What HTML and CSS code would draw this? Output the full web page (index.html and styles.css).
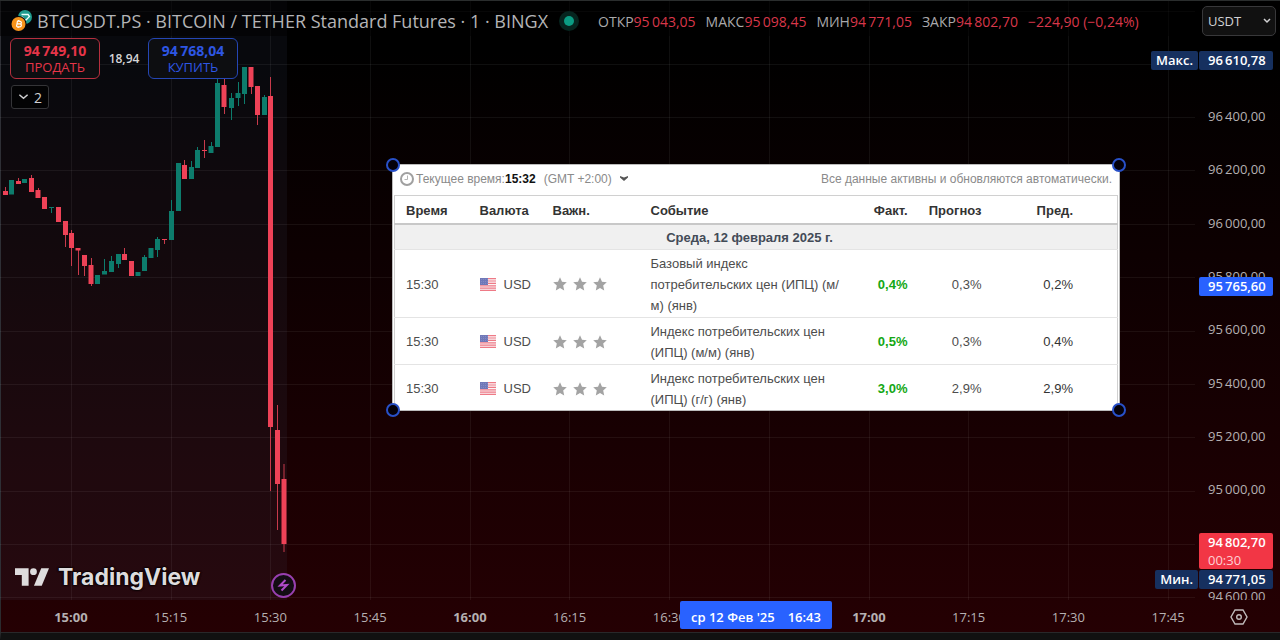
FILE: index.html
```html
<!DOCTYPE html>
<html lang="ru">
<head>
<meta charset="utf-8">
<meta name="viewport" content="width=device-width, initial-scale=1">
<title>BTCUSDT.PS — TradingView</title>
<link rel="stylesheet" href="styles.css">
</head>
<body>
<svg width="0" height="0" class="defs" aria-hidden="true">
  <defs>
    <symbol id="flag" viewBox="0 0 16 13">
      <path fill="#fbf3f4" d="M0 0h16v13H0z"/>
      <path stroke="#ee7a86" stroke-width="1.2" d="M0 .6h16M0 3h16M0 5.4h16M0 7.8h16M0 10.200h16M0 12.400h16"/>
      <path fill="#7078b8" d="M0 0h8v7H0z"/>
      <path stroke="#8b92c8" stroke-width=".7" stroke-dasharray="1 1" d="M1 1.500h7M1 3.500h7M1 5.500h7"/>
    </symbol>
    <symbol id="star" viewBox="0 0 14 14">
      <path fill="#a3a3a3" d="M7 .3l2 4.500 4.800.5-3.600 3.300 1 4.900L7 11l-4.200 2.500 1-4.900L.2 5.300 5 4.800z"/>
    </symbol>
  </defs>
</svg>
<main class="terminal">
  <section class="stage">
    <svg class="plot" aria-label="График BTCUSDT">
      <rect class="session" width="287" height="100%"/>
      <g class="grid-lines">
        <path d="M0 11.500H1195M0 64.500H1195M0 117.500H1195M0 170.500H1195M0 224.500H1195M0 277.500H1195M0 331.500H1195M0 384.500H1195M0 437.500H1195M0 491.500H1195M0 544.500H1195M0 597.500H1195"/>
        <path d="M71.500 0V600M171.500 0V600M270.500 0V600M370.500 0V600M470.500 0V600M569.500 0V600M669.500 0V600M769.500 0V600M869.500 0V600M968.500 0V600M1068.500 0V600M1168.500 0V600"/>
      </g>
      <g class="up">
        <path d="M51.500 207V213M104.500 259V274M111.500 256V272M118.500 254V268M144.500 255V271M157.500 237V257M171.500 200V240M191.500 161V179M197.500 147V168M211.500 142V153M217.500 79V147M231.500 93V120M238.500 82V106M244.500 67V104M264.500 95V115"/>
        <path class="body" d="M11.500 180V194.500M24.500 179V183M51.500 207V208M97.500 275V284M104.500 271V274.500M111.500 261V272M118.500 254V264M138 272V276M144.500 257V271M151 248V258M157.500 239V250M171.500 211V240M178.500 163V211M191.500 167V179M197.500 150V168M211 146V153M217.500 83V147M231.500 98V108M238 93V98M244.500 67V94M264.500 97V115"/>
      </g>
      <g class="down">
        <path d="M5.500 187V194M18.500 178V184M31.500 175V192M38.500 188V198M65.500 221V247M71.500 230V266M78.500 248V275M84.500 255V276M91.500 258V286M124.500 248V260M164.500 239V244M184.500 160V179M204.500 140V158M224.500 79V114M251.500 67V94M257.500 86V125M270.500 77V491M277.500 405V530M284 464V552"/>
        <path class="body" d="M5.500 191V195M18.500 181V184M31.500 178V192M38 190V198M44.500 197V209M58.500 207V222M65.500 221V235M71.500 233V248M78 248V250.500M84.500 255V266M91 265V284M124.500 254V260M131.500 261V276M164.500 239V240M184.500 165V179M204.500 150V151M224 85V107M251 67V87M257.500 86V115M270.500 96V427M277.500 430V484M284 479V544"/>
      </g>
    </svg>

    <header class="legend">
      <svg class="pair" viewBox="0 0 22 22" aria-hidden="true">
        <circle cx="14" cy="7" r="7" fill="#1f9b8e"/>
        <path d="M10.500 4.500h7M10.500 6.500l4 4 4-4-1.500-2" fill="none" stroke="#e8fffb" stroke-width="1.300"/>
        <circle cx="7.500" cy="14" r="8" fill="#05060a"/>
        <circle cx="7.500" cy="14" r="7" fill="#f7931a"/>
        <path d="M6 11l3 .3c2 .4 1.700 2.500 0 2.600l-3-.2m3 .2c2.200.5 1.600 3-.5 2.900l-3-.3m1-5.500l-1 5.500M7.800 10v1M7 16.500v1.500" fill="none" stroke="#fff" stroke-width="1.200"/>
      </svg>
      <h1>BTCUSDT.PS · BITCOIN / TETHER Standard Futures · 1 · BINGX</h1>
      <span class="status" title="Рынок открыт"></span>
      <p class="ohlc">
        <span>ОТКР<b>95&#8201;043,05</b></span>
        <span>МАКС<b>95&#8201;098,45</b></span>
        <span>МИН<b>94&#8201;771,05</b></span>
        <span>ЗАКР<b>94&#8201;802,70</b></span>
        <b>−224,90 (−0,24%)</b>
      </p>
      <div class="currency">
        <select aria-label="Валюта"><option>USDT</option></select>
        <svg viewBox="0 0 8 6" aria-hidden="true"><path d="M1 1l3 3 3-3"/></svg>
      </div>
    </header>

    <div class="orders">
      <button class="order sell" type="button"><strong>94&#8201;749,10</strong><span>ПРОДАТЬ</span></button>
      <span class="spread">18,94</span>
      <button class="order buy" type="button"><strong>94&#8201;768,04</strong><span>КУПИТЬ</span></button>
    </div>
    <button class="collapse" type="button" aria-label="Индикаторы: 2"><svg viewBox="0 0 12 8" aria-hidden="true"><path d="M1.500 1.500L6 5.500l4.500-4"/></svg>2</button>

    <article class="news">
      <div class="news-bar">
        <svg class="clock" viewBox="0 0 14 14" aria-hidden="true"><circle cx="7" cy="7" r="6"/><path d="M7.500 3.500V7.500H4.500"/></svg>
        <span>Текущее время:</span><time>15:32</time><span class="gmt">(GMT +2:00)</span>
        <svg class="caret" viewBox="0 0 8 5" aria-hidden="true"><path d="M0 0l4 1.500L8 0v1.500L4 5 0 1.500z"/></svg>
        <span class="note">Все данные активны и обновляются автоматически.</span>
      </div>
      <table>
        <colgroup><col class="c-time"><col class="c-cur"><col class="c-imp"><col class="c-event"><col class="c-fact"><col class="c-fore"><col class="c-prev"></colgroup>
        <thead>
          <tr><th>Время</th><th>Валюта</th><th>Важн.</th><th>Событие</th><th class="num">Факт.</th><th class="num">Прогноз</th><th class="num prev">Пред.</th></tr>
        </thead>
        <tbody>
          <tr class="date"><td colspan="7">Среда, 12 февраля 2025 г.</td></tr>
          <tr>
            <td>15:30</td>
            <td><span class="cur"><svg><use href="#flag"/></svg>USD</span></td>
            <td><span class="stars"><svg><use href="#star"/></svg><svg><use href="#star"/></svg><svg><use href="#star"/></svg></span></td>
            <td class="event">Базовый индекс<br>потребительских цен (ИПЦ) (м/<br>м) (янв)</td>
            <td class="num fact">0,4%</td><td class="num">0,3%</td><td class="num prev">0,2%</td>
          </tr>
          <tr>
            <td>15:30</td>
            <td><span class="cur"><svg><use href="#flag"/></svg>USD</span></td>
            <td><span class="stars"><svg><use href="#star"/></svg><svg><use href="#star"/></svg><svg><use href="#star"/></svg></span></td>
            <td class="event">Индекс потребительских цен<br>(ИПЦ) (м/м) (янв)</td>
            <td class="num fact">0,5%</td><td class="num">0,3%</td><td class="num prev">0,4%</td>
          </tr>
          <tr>
            <td>15:30</td>
            <td><span class="cur"><svg><use href="#flag"/></svg>USD</span></td>
            <td><span class="stars"><svg><use href="#star"/></svg><svg><use href="#star"/></svg><svg><use href="#star"/></svg></span></td>
            <td class="event">Индекс потребительских цен<br>(ИПЦ) (г/г) (янв)</td>
            <td class="num fact">3,0%</td><td class="num">2,9%</td><td class="num prev">2,9%</td>
          </tr>
        </tbody>
      </table>
      <i class="handle tl"></i><i class="handle tr"></i><i class="handle bl"></i><i class="handle br"></i>
    </article>

    <div class="brand">
      <svg viewBox="0 0 36 18" aria-hidden="true"><path d="M0 0h14v18H7V7H0z"/><circle cx="19" cy="3.500" r="3.500"/><path d="M27 0h8l-7.500 18h-8z"/></svg>
      <span>TradingView</span>
    </div>
    <button class="flash" type="button" aria-label="Событие"><svg viewBox="0 0 21 21" aria-hidden="true"><path d="M12.500 5L7 10.500l7-.5L8.500 15.500"/></svg></button>

    <aside class="scale">
      <ul>
        <li>96&#8201;400,00</li><li>96&#8201;200,00</li><li>96&#8201;000,00</li><li>95&#8201;800,00</li><li>95&#8201;600,00</li><li>95&#8201;400,00</li><li>95&#8201;200,00</li><li>95&#8201;000,00</li><li></li><li>94&#8201;600,00</li>
      </ul>
    </aside>
    <div class="mark high"><span>Макс.</span><b>96&#8201;610,78</b></div>
    <div class="mark cross"><b>95&#8201;765,60</b></div>
    <div class="mark last"><b>94&#8201;802,70</b><span>00:30</span></div>
    <div class="mark low"><span>Мин.</span><b>94&#8201;771,05</b></div>
  </section>

  <footer class="axis">
    <ol>
      <li class="hour">15:00</li><li>15:15</li><li>15:30</li><li>15:45</li><li class="hour">16:00</li><li>16:15</li><li>16:30</li><li></li><li class="hour">17:00</li><li>17:15</li><li>17:30</li><li>17:45</li>
    </ol>
    <div class="cursor-time"><span>ср 12 Фев '25</span><span>16:43</span></div>
    <button class="settings" type="button" aria-label="Настройки"><svg viewBox="0 0 18 18" aria-hidden="true"><path d="M5 2h8l4 7-4 7H5L1 9z"/><circle cx="9" cy="9" r="2.300"/></svg></button>
  </footer>
</main>
</body>
</html>
```

FILE: styles.css
```css
* { box-sizing: border-box; }
body {
  margin: 0;
  background: #111;
  color: #b5b0b2;
  font-family: "Trebuchet MS", "Open Sans", "Noto Sans", sans-serif;
  font-size: 13px;
}
button, select { font: inherit; color: inherit; }
ul, ol { margin: 0; padding: 0; list-style: none; }
.defs { position: absolute; }

.terminal {
  display: flex;
  flex-direction: column;
  min-height: 100vh;
  border-bottom: 7px solid #111;
  border-top: 1px solid #2a2d2d;
  border-left: 1px solid #2b2b2e;
  background: linear-gradient(#000 8%, #250003);
}
.stage {
  position: relative;
  flex: 1;
  overflow: hidden;
  margin: -1px 0 0 -1px;
}
.plot { position: absolute; inset: 0; width: 100%; height: 100%; }
.session { fill: rgba(70, 85, 120, .11); }
.grid-lines path { stroke: rgba(255, 255, 255, .06); fill: none; }
.up path { stroke: #0d7c6c; }
.down path { stroke: #c83a4b; }
.up .body { stroke-width: 5; }
.down .body { stroke: #ee4257; stroke-width: 5; }

.legend {
  position: relative;
  display: flex;
  align-items: center;
  padding: 5px 4px 0 11px;
  border-top: 1px solid #2a2d2d;
  background: rgba(0, 0, 0, .5);
}
.pair { width: 22px; height: 22px; margin-right: 4px; }
.legend h1 {
  margin: 0;
  font-size: 18px;
  font-weight: 400;
  line-height: 28px;
  white-space: nowrap;
  color: #b4b4b6;
}
.status {
  flex: none;
  width: 10px;
  height: 10px;
  margin: 0 24px 0 16px;
  border-radius: 50%;
  background: #0b9c83;
  box-shadow: 0 0 0 5px #06251f;
}
.ohlc {
  display: flex;
  gap: 10px;
  margin: 0;
  font-size: 14px;
  white-space: nowrap;
  color: #a9a9ab;
}
.ohlc b { font-weight: 400; color: #d8374a; }
.currency { position: relative; margin-left: auto; }
.currency select {
  display: block;
  width: 74px;
  height: 30px;
  padding: 0 5px;
  appearance: none;
  border: 1px solid #38383a;
  border-radius: 5px;
  background: #111;
  color: #d2d2d4;
}
.currency svg { position: absolute; right: 5px; top: 12px; width: 8px; height: 6px; pointer-events: none; }
.currency path { fill: none; stroke: #d2d2d4; stroke-width: 1.5; }

.orders {
  position: relative;
  display: flex;
  align-items: center;
  width: max-content;
  gap: 10px;
  margin: 2px 0 0 10px;
}
.order {
  display: flex;
  flex-direction: column;
  align-items: center;
  justify-content: center;
  width: 90px;
  height: 41px;
  padding: 0;
  border: 1px solid;
  border-radius: 6px;
  background: #0d0e11;
  line-height: 16px;
}
.order strong { font-size: 14px; }
.sell { color: #e63549; border-color: #b52f3e; }
.buy { color: #2d56e4; border-color: #2546b4; }
.spread { width: 28px; display: flex; justify-content: center; font-size: 12px; font-weight: 600; color: #d5d5d7; }
.collapse {
  position: relative;
  display: flex;
  align-items: center;
  gap: 5px;
  width: 38px;
  height: 24px;
  margin: 6px 0 0 11px;
  padding: 0 6px;
  border: 1px solid #343437;
  border-radius: 3px;
  background: #030304;
  font-size: 14px;
  color: #d0d0d2;
}
.collapse svg { width: 12px; height: 8px; }
.collapse path { fill: none; stroke: currentColor; stroke-width: 1.6; }

.news {
  position: absolute;
  left: 392px;
  top: 164px;
  width: 728px;
  border: 1px solid #bbb;
  background: #fff;
  color: #4d4d4d;
  font: 13px "Liberation Sans", Arial, sans-serif;
}
.news-bar {
  display: flex;
  align-items: center;
  height: 30px;
  padding: 0 7px 3px;
  font-size: 12px;
  color: #8a8a8a;
}
.clock { width: 14px; height: 14px; margin-right: 2px; }
.clock circle { fill: none; stroke: #a0a0a0; stroke-width: 2; }
.clock path { fill: none; stroke: #b5b5b5; }
.news-bar time { font-weight: 700; color: #111; }
.gmt { margin: 0 8px; }
.caret { width: 8px; height: 5px; fill: #555; }
.note { margin-left: auto; }
.news table {
  width: 724px;
  margin-left: 1px;
  table-layout: fixed;
  border-collapse: collapse;
  border: 1px solid #d0d0d0;
  border-bottom: 0;
}
.c-time { width: 74px; }
.c-cur { width: 73px; }
.c-imp { width: 98px; }
.c-event { width: 206px; }
.c-fact { width: 62px; }
.c-fore { width: 74px; }
.news th, .news td { padding: 0 0 0 11px; text-align: left; }
.news th { height: 28px; padding-top: 2px; color: #333; border-bottom: 2px solid #c8c8c8; }
.news td { padding-top: 3px; padding-bottom: 1px; line-height: 21px; border-bottom: 1px solid #e4e4e4; }
.news tr:last-child td { padding-bottom: 0; border-bottom: 0; }
.news .date td { padding: 2px 24px 1px 11px; background: #f0f0f0; color: #434b57; font-weight: 700; text-align: center; }
.news .num { padding-left: 0; text-align: right; }
.news .prev { padding-right: 44px; color: #333; }
.news .fact { color: #14a714; font-weight: 700; }
.cur { display: flex; align-items: center; gap: 8px; }
.cur svg { width: 16px; height: 13px; }
.stars { display: flex; gap: 6px; }
.stars svg { width: 14px; height: 14px; }
.handle {
  position: absolute;
  width: 14px;
  height: 14px;
  border: 2px solid #2850c8;
  border-radius: 50%;
  background: #05010a;
}
.tl, .bl { left: -7px; }
.tr, .br { right: -7px; }
.tl, .tr { top: -7px; }
.bl, .br { bottom: -7px; }

.brand {
  position: absolute;
  left: 15px;
  bottom: 7px;
  display: flex;
  align-items: center;
  gap: 8px;
  font: 700 23px/32px Inter, sans-serif;
  color: #dedcdd;
  text-shadow: 0 0 2px #000, 0 0 2px #000, 0 0 2px #000;
}
.brand svg { width: 35px; height: 18px; fill: currentColor; }
.flash {
  position: absolute;
  left: 271px;
  bottom: 2px;
  width: 25px;
  height: 25px;
  padding: 0;
  border: 2px solid #9840b0;
  border-radius: 50%;
  background: #130d14;
}
.flash svg { display: block; width: 21px; height: 21px; fill: none; stroke: #b04ac8; stroke-width: 2; }

.scale {
  position: absolute;
  inset: 0 0 0 auto;
  width: 82px;
  overflow: hidden;
}
.scale ul {
  display: flex;
  flex-direction: column;
  justify-content: space-between;
  height: calc(100% + 6px);
  padding: 106px 0 0 10px;
}
.scale li { height: 20px; line-height: 20px; }
.mark {
  position: absolute;
  right: 7px;
  display: flex;
  gap: 1px;
  line-height: 19px;
  color: #fff;
}
.mark b, .mark span { background: #16305f; border-radius: 2px; font-weight: 600; }
.mark b { width: 74px; padding-left: 9px; }
.mark span { padding: 0 5px; }
.high { top: 51px; }
.mark.cross b { background: #2962ff; }
.cross { top: 277px; }
.last { top: 533px; flex-direction: column; gap: 0; border-radius: 2px; background: #f23645; line-height: 18px; }
.mark.last b, .mark.last span { background: none; }
.mark.last span { padding: 0 9px; font-weight: 400; color: #ffd0d4; }
.low { top: 570px; }

.axis { position: relative; height: 33px; border-bottom: 1px solid #29282a; }
.axis ol {
  display: grid;
  grid-template-columns: repeat(12, 1fr);
  padding: 0 62px 0 20px;
  line-height: 34px;
  text-align: center;
}
.hour { font-weight: 700; }
.cursor-time {
  position: absolute;
  left: 679px;
  top: 1px;
  display: flex;
  justify-content: center;
  gap: 13px;
  width: 152px;
  height: 28px;
  line-height: 32px;
  border-radius: 2px;
  background: #2962ff;
  color: #fff;
  font-weight: 600;
  white-space: nowrap;
}
.settings {
  position: absolute;
  right: 32px;
  top: 8px;
  padding: 0;
  border: 0;
  background: none;
}
.settings svg { display: block; width: 18px; height: 18px; fill: none; stroke: #c0bbbc; stroke-width: 1.4; }
```
